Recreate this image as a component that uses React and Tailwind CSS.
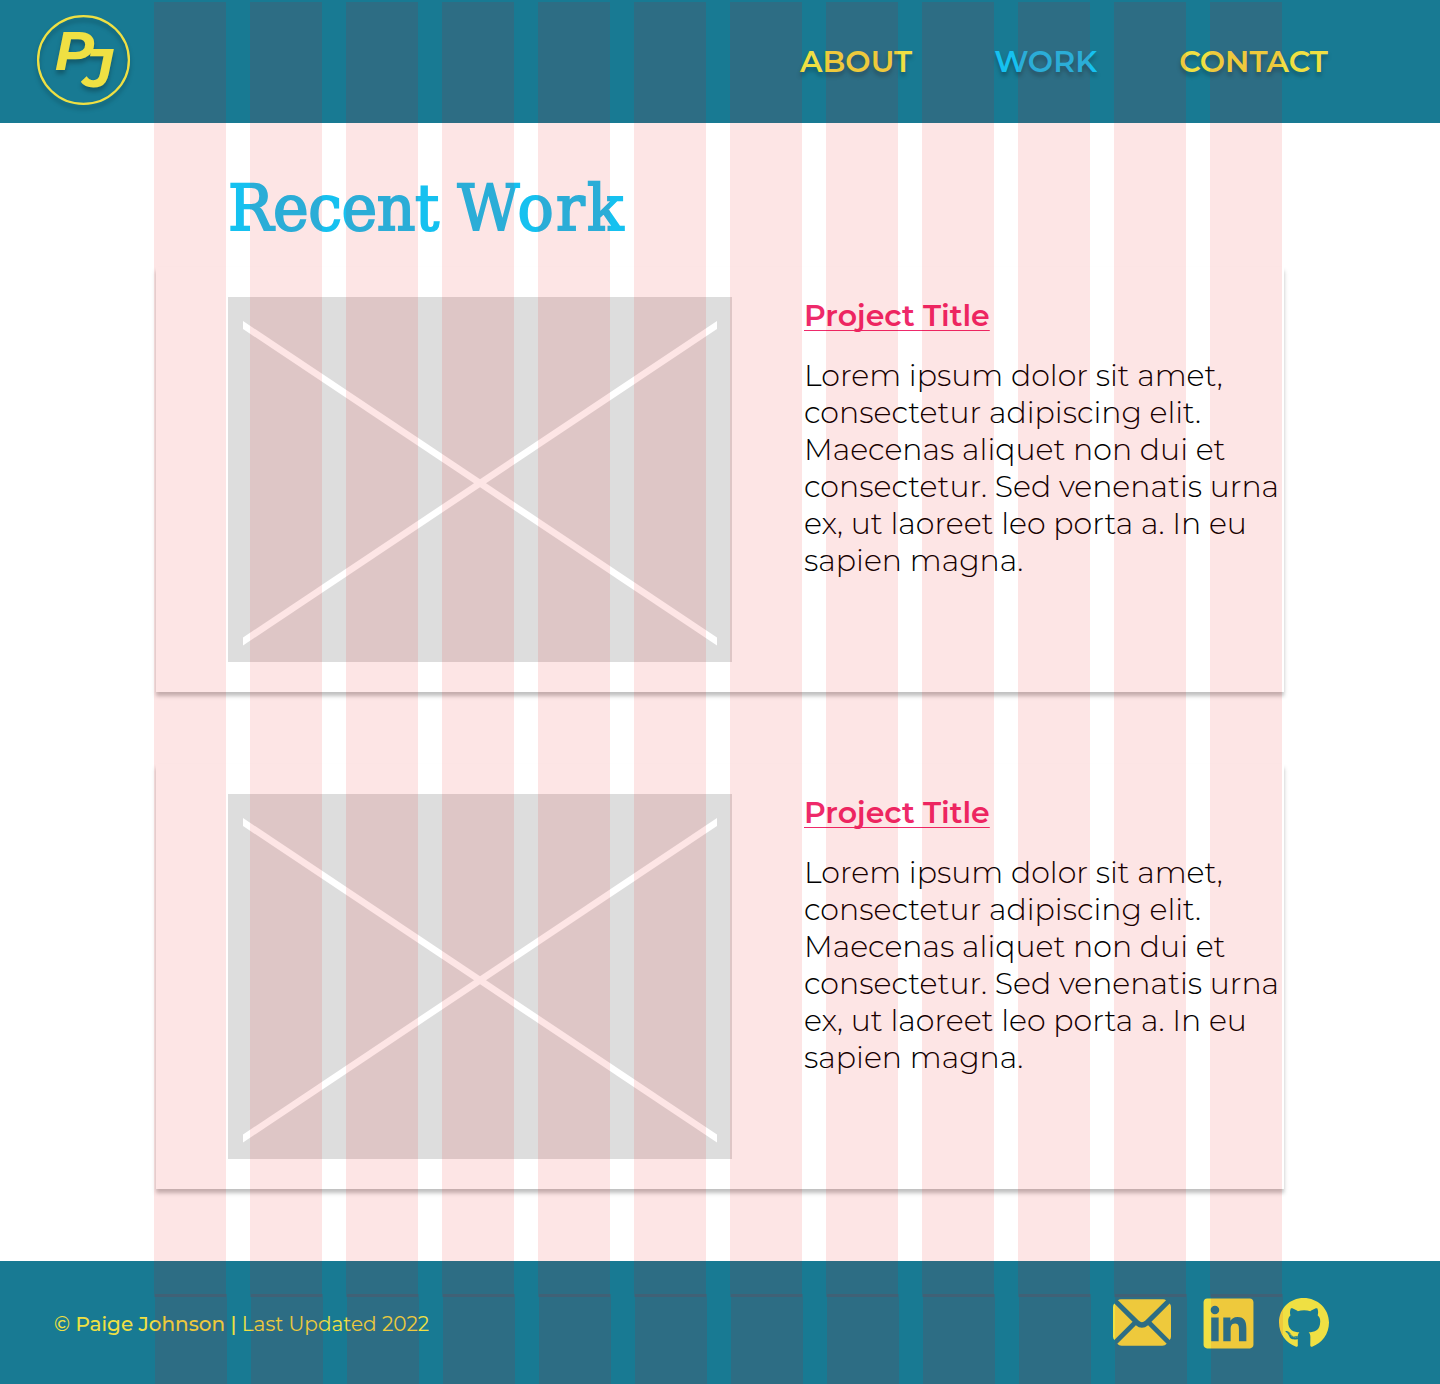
import { FaGithub, FaLinkedin } from "react-icons/fa";

const paragraph = [
  "Lorem ipsum dolor sit amet,",
  "consectetur adipiscing elit.",
  "Maecenas aliquet non dui et",
  "consectetur. Sed venenatis urna",
  "ex, ut laoreet leo porta a. In eu",
  "sapien magna.",
];

function Logo() {
  return (
    <svg
      viewBox="0 0 93 90"
      className="h-[90px] w-[93px] overflow-visible drop-shadow-[0_4px_2px_rgba(0,0,0,0.25)]"
      fill="#efe043"
    >
      <ellipse cx="46.5" cy="45" rx="45.4" ry="43.9" fill="none" stroke="#efe043" strokeWidth="2.3" />
      <text fontFamily='Montserrat, "Open Sans", sans-serif' fontWeight="700" fontStyle="italic" fontSize="55">
        <tspan x="17.3" y="55">P</tspan>
        <tspan x="46.5" y="72">J</tspan>
      </text>
    </svg>
  );
}

function Envelope() {
  return (
    <svg viewBox="0 0 175 140" className="-mt-px h-[47px] w-[58px]" fill="#efe043">
      <path d="M15 3Q18 0 24 0H151Q157 0 160 3L97 65Q87 74 78 65Z" />
      <path d="M4 13L59 68L4 123Q0 119 0 113V23Q0 17 4 13Z" />
      <path d="M171 13L116 68L171 123Q175 119 175 113V23Q175 17 171 13Z" />
      <path d="M13 134L69 78Q87 94 106 78L162 134Q157 140 149 140H26Q18 140 13 134Z" />
    </svg>
  );
}

function ProjectCard() {
  return (
    <article className="flex h-[425px] w-[1128px] bg-white pt-[30px] pl-[72px] shadow-[0_4px_4px_rgba(0,0,0,0.25)]">
      <svg viewBox="0 0 504 365" className="h-[365px] w-[504px] shrink-0 bg-[#dddddd]" fill="#ffffff">
        <path d="M15 24L489 340.5V348.5L15 32Z" />
        <path d="M15 340.5L489 24V32L15 348.5Z" />
      </svg>
      <div className="ml-[72px] whitespace-nowrap text-[30px] leading-[37px]">
        <h2 className="font-semibold text-[#ee2a6b] underline decoration-[1px] underline-offset-[4px] [text-decoration-skip-ink:none]">
          Project Title
        </h2>
        <p className="mt-[23px] font-light text-black">
          {paragraph.map((line) => (
            <span key={line} className="block">{line}</span>
          ))}
        </p>
      </div>
    </article>
  );
}

function Columns() {
  return (
    <div className="grid h-full grid-cols-12 gap-6">
      {Array.from({ length: 12 }, (_, i) => (
        <div key={i} className="bg-[rgba(235,0,0,0.1)]" />
      ))}
    </div>
  );
}

export default function App() {
  return (
    <div className="relative flex h-[1384px] w-[1440px] flex-col overflow-hidden bg-white font-[Montserrat,'Open_Sans',sans-serif]">
      <header className="flex h-[123px] shrink-0 items-center bg-[#187a93] pr-[112px] pl-[37px]">
        <div className="mb-[3px]"><Logo /></div>
        <nav className="ml-auto flex gap-[82px] text-[30px] leading-[37px] font-semibold tracking-[0.07px] text-[#efe043] [text-shadow:0_4px_4px_rgba(0,0,0,0.25)]">
          <a>ABOUT</a>
          <a className="text-[#16c1f0]">WORK</a>
          <a>CONTACT</a>
        </nav>
      </header>

      <main className="flex-1 pl-[156px]">
        <h1 className="mt-[43px] mb-[17px] ml-[72px] w-fit origin-left scale-x-[0.94] font-['DejaVu_Serif',serif] text-[64px] leading-[84px] tracking-[-0.4px] whitespace-nowrap text-[#16c1f0] [-webkit-text-stroke:2px_#16c1f0]">
          Recent <span className="tracking-[2.4px]">Work</span>
        </h1>
        <div className="flex flex-col gap-[72px]">
          <ProjectCard />
          <ProjectCard />
        </div>
      </main>

      <footer className="flex h-[123px] shrink-0 items-center justify-between bg-[#187a93] pr-[111px] pl-[54px] text-[#efe043]">
        <p className="mt-[3px] text-[20px] leading-6">
          <span className="font-medium">© Paige Johnson | </span>
          <span>Last Updated 2022</span>
        </p>
        <div className="mt-px flex items-center">
          <Envelope />
          <FaLinkedin className="ml-[28.6px] h-[57px] w-[57px]" />
          <FaGithub className="ml-[22.4px] h-[52px] w-[50px]" />
        </div>
      </footer>

      <div className="pointer-events-none absolute top-[2px] left-[154px] h-[1295px] w-[1128px]">
        <Columns />
      </div>
      <div className="pointer-events-none absolute top-[1294px] left-[155px] h-[90px] w-[1128px]">
        <Columns />
      </div>
    </div>
  );
}
